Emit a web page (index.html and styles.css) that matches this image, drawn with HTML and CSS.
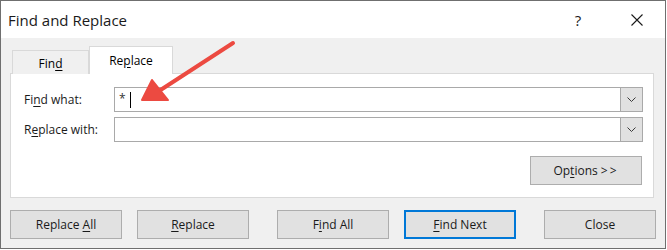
FILE: index.html
```html
<!DOCTYPE html>
<html>
<head>
<meta charset="utf-8">
<link rel="stylesheet" href="styles.css">
</head>
<body>
<div class="window">
  <div class="titlebar">
    <span class="title">Find and Replace</span>
    <span class="help">?</span>
    <span class="close-x">
      <svg width="12" height="12" viewBox="0 0 12 12"><path d="M0.5 0.5L11.5 11.5M11.5 0.5L0.5 11.5" stroke="#1a1a1a" stroke-width="1.1" fill="none"/></svg>
    </span>
  </div>
  <div class="content">
    <div class="tabs">
      <div class="tab"><span>Fin<u>d</u></span></div>
      <div class="tab active"><span>Re<u>p</u>lace</span></div>
    </div>
    <div class="panel">
      <div class="row">
        <label class="label">Fi<u>n</u>d what:</label>
        <div class="combo">
          <div class="field"><span class="star">*</span><span class="caret"></span></div>
          <div class="drop"><svg width="9" height="5" viewBox="0 0 9 5"><path d="M0.5 0.5L4.5 4.5L8.5 0.5" stroke="#3a3a3a" stroke-width="1" fill="none"/></svg></div>
        </div>
      </div>
      <div class="row">
        <label class="label">R<u>e</u>place with:</label>
        <div class="combo">
          <div class="field"></div>
          <div class="drop"><svg width="9" height="5" viewBox="0 0 9 5"><path d="M0.5 0.5L4.5 4.5L8.5 0.5" stroke="#3a3a3a" stroke-width="1" fill="none"/></svg></div>
        </div>
      </div>
      <div class="opts-row">
        <button class="btn"><span>Op<u>t</u>ions <span class="gt">&gt;&gt;</span></span></button>
      </div>
    </div>
    <div class="buttons">
      <div class="group">
        <button class="btn"><span>Replace <u>A</u>ll</span></button>
        <button class="btn"><span><u>R</u>eplace</span></button>
      </div>
      <div class="group">
        <button class="btn"><span>F<u>i</u>nd All</span></button>
        <button class="btn primary"><span><u>F</u>ind Next</span></button>
      </div>
      <button class="btn"><span>Close</span></button>
    </div>
  </div>
  <svg class="arrow" width="120" height="75" viewBox="0 0 120 75">
    <line x1="112" y1="5" x2="38" y2="53" stroke="#ec4a41" stroke-width="4" stroke-linecap="round"/>
    <polygon points="21,62 31,42 47,62" fill="#ec4a41" stroke="#ec4a41" stroke-width="2" stroke-linejoin="round"/>
  </svg>
</div>
</body>
</html>
```
FILE: styles.css
```css
* { box-sizing: border-box; }
body {
  margin: 0;
  background: #ffffff;
  font-family: "Open Sans", "Noto Sans", sans-serif;
  font-size: 12px;
  color: #000;
}
.window {
  position: relative;
  width: 666px;
  height: 249px;
  border: 1px solid #6f6f6f;
  background: #f0f0f0;
  display: flex;
  flex-direction: column;
}
.titlebar {
  height: 37px;
  background: #ffffff;
  display: flex;
  align-items: center;
  padding-left: 7px;
}
.title {
  font-size: 15px;
  flex: 1;
  color: #1a1a1a;
}
.help {
  font-size: 15px;
  width: 14px;
  text-align: center;
  margin-right: 46px;
  color: #1a1a1a;
}
.close-x {
  display: flex;
  margin-right: 22px;
}
.content {
  padding: 9px 9px 0 9px;
  display: flex;
  flex-direction: column;
}
.tabs {
  display: flex;
  align-items: flex-end;
  padding-left: 2px;
  height: 27px;
  position: relative;
  z-index: 1;
  margin-bottom: -1px;
}
.tab {
  height: 24px;
  width: 77px;
  border: 1px solid #d9d9d9;
  border-bottom: none;
  background: #f0f0f0;
  display: flex;
  align-items: center;
  justify-content: center;
  padding-top: 2px;
}
.tab.active {
  height: 28px;
  width: 84px;
  background: #ffffff;
  padding-top: 0;
}
.panel {
  width: 644px;
  height: 125px;
  background: #ffffff;
  border: 1px solid #d9d9d9;
  padding: 13px 10px 0 13px;
  display: flex;
  flex-direction: column;
  gap: 5px;
}
.row {
  display: flex;
  align-items: center;
}
.label {
  width: 90px;
  color: #1a1a1a;
}
.combo {
  flex: 1;
  height: 25px;
  border: 1px solid #a9a9a9;
  display: flex;
}
.field {
  flex: 1;
  display: flex;
  align-items: center;
  padding-left: 4px;
}
.star {
  font-size: 12px;
  color: #333;
  margin-right: 4px;
  margin-top: -2px;
}
.caret {
  width: 1px;
  height: 16px;
  background: #000;
}
.drop {
  width: 22px;
  background: #e1e1e1;
  border-left: 1px solid #a9a9a9;
  display: flex;
  align-items: center;
  justify-content: center;
}
.opts-row {
  display: flex;
  justify-content: flex-end;
  padding-right: 1px;
  margin-top: 9px;
}
.btn {
  width: 112px;
  height: 29px;
  background: #e1e1e1;
  border: 1px solid #adadad;
  font-family: "Open Sans", "Noto Sans", sans-serif;
  font-size: 12px;
  color: #1a1a1a;
  padding: 0;
  display: flex;
  align-items: center;
  justify-content: center;
}
.gt {
  letter-spacing: 2px;
}
.btn.primary {
  border: 2px solid #0078d7;
}
.buttons {
  display: flex;
  justify-content: space-between;
  margin-top: 12px;
  width: 646px;
}
.group {
  display: flex;
  gap: 15px;
}
u {
  text-underline-offset: 2px;
}
.arrow {
  position: absolute;
  left: 120px;
  top: 37px;
}
```
